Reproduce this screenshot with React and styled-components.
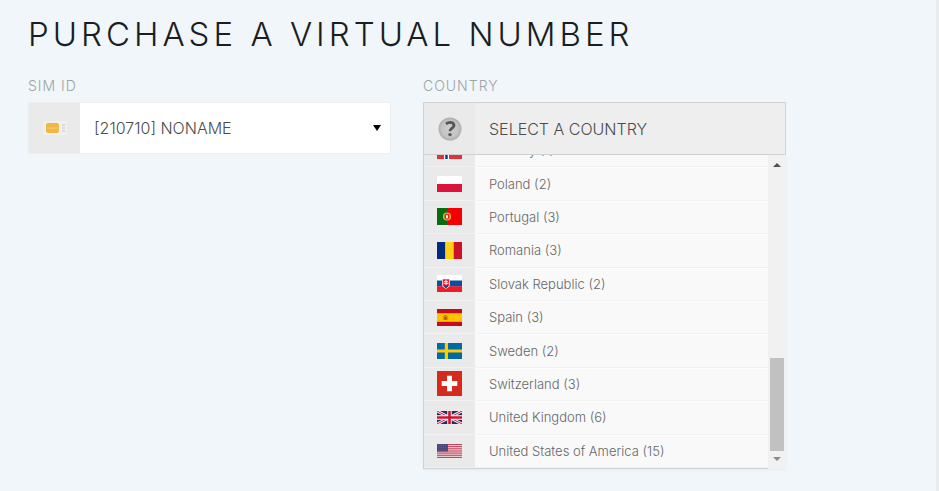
import React, { useState } from 'react'
import styled, { createGlobalStyle } from 'styled-components'

const countries = [
  { code: 'no', name: 'Norway', count: 1 },
  { code: 'pl', name: 'Poland', count: 2 },
  { code: 'pt', name: 'Portugal', count: 3 },
  { code: 'ro', name: 'Romania', count: 3 },
  { code: 'sk', name: 'Slovak Republic', count: 2 },
  { code: 'es', name: 'Spain', count: 3 },
  { code: 'se', name: 'Sweden', count: 2 },
  { code: 'ch', name: 'Switzerland', count: 3 },
  { code: 'gb', name: 'United Kingdom', count: 6 },
  { code: 'us', name: 'United States of America', count: 15 },
]

// every flag is 25 wide, the height follows the country's own ratio
const flags = {
  no: {
    height: 18,
    art: (
      <>
        <path fill='#e03238' d='M0 0h25v18H0z' />
        <path fill='#fff' d='M7 0h5v18H7zM0 6.500h25v5H0z' />
        <path fill='#17306b' d='M8.300 0h2.400v18H8.300zM0 7.800h25v2.400H0z' />
      </>
    ),
  },
  pl: {
    height: 16,
    art: (
      <>
        <path fill='#fff' d='M0 0h25v8H0z' />
        <path fill='#dc143c' d='M0 8h25v8H0z' />
      </>
    ),
  },
  pt: {
    height: 17,
    art: (
      <>
        <path fill='#f50000' d='M0 0h25v17H0z' />
        <path fill='#0a6a10' d='M0 0h10v17H0z' />
        <circle cx='10' cy='8.500' r='3.500' fill='#c8662a' stroke='#d8bf2a' strokeWidth='1.100' />
        <path fill='#e8201c' d='M8 6.200h4v3.300a2 2 0 0 1-4 0z' />
        <path fill='#fff' d='M9 7.200h2v2.300a1 1 0 0 1-2 0z' />
      </>
    ),
  },
  ro: {
    height: 17,
    art: (
      <>
        <path fill='#002b7f' d='M0 0h8.400v17H0z' />
        <path fill='#fcd116' d='M8.400 0h8.300v17H8.400z' />
        <path fill='#ce1126' d='M16.700 0H25v17h-8.300z' />
      </>
    ),
  },
  sk: {
    height: 17,
    art: (
      <>
        <path fill='#fff' d='M0 0h25v6H0z' />
        <path fill='#0b4ea2' d='M0 5.500h25v6H0z' />
        <path fill='#ee1c25' d='M0 11.300h25V17H0z' />
        <path fill='#fff' d='M5 3.500h8v5.500q0 3.200-4 4.700-4-1.500-4-4.700z' />
        <path fill='#ee1c25' d='M5.700 4.200h6.600V9q0 2.700-3.300 4-3.300-1.300-3.300-4z' />
        <path fill='#fff' d='M8.500 4.800h1v1.100h1.400v.9H9.500v1h2v.9h-2v1.500h-1V8.700h-2v-.9h2v-1H7.100v-.9h1.400z' />
        <path fill='#0b4ea2' d='M6.700 11q1-1.400 2.300-.6 1.300-.8 2.300.6-.8 1.300-2.300 2-1.500-.7-2.300-2z' />
      </>
    ),
  },
  es: {
    height: 17,
    art: (
      <>
        <path fill='#c60b1e' d='M0 0h25v17H0z' />
        <path fill='#ffc400' d='M0 4.200h25v8.600H0z' />
        <path fill='#c98a2c' d='M5.800 6.800h1v4.200h-1zM10.200 6.800h1v4.200h-1z' />
        <path fill='#b4502a' d='M7.200 5.900h2.600v.9H7.200zM7.200 7.500h2.600v2.500a1.300 1.300 0 0 1-2.600 0z' />
      </>
    ),
  },
  se: {
    height: 16,
    art: (
      <>
        <path fill='#006aa7' d='M0 0h25v16H0z' />
        <path fill='#fecc00' d='M7.800 0H11v16H7.800zM0 6.400h25v3.200H0z' />
      </>
    ),
  },
  ch: {
    height: 25,
    art: (
      <>
        <path fill='#d52b1e' d='M0 0h25v25H0z' />
        <path fill='#fff' d='M10 4.700h5V10h5.300v5H15v5.300h-5V15H4.700v-5H10z' />
      </>
    ),
  },
  gb: {
    height: 13,
    art: (
      <>
        <path fill='#1c2f70' d='M0 0h25v13H0z' />
        <path stroke='#fff' strokeWidth='2.800' d='M0 0l25 13M25 0L0 13' />
        <path stroke='#cf142b' strokeWidth='1' d='M0 0l25 13M25 0L0 13' />
        <path fill='#fff' d='M10.300 0h4.400v13h-4.400zM0 4.300h25v4.400H0z' />
        <path fill='#cf142b' d='M11.200 0h2.600v13h-2.600zM0 5.200h25v2.600H0z' />
      </>
    ),
  },
  us: {
    height: 14,
    art: (
      <>
        <path fill='#eac8cf' d='M0 0h25v14H0z' />
        <path stroke='#c2455c' d='M0 .5h25M0 2.600h25M0 4.800h25M0 7h25M0 9.100h25M0 11.300h25M0 13.500h25' />
        <path fill='#484678' d='M0 0h11v7.500H0z' />
        <path stroke='#9492b2' strokeWidth='.6' strokeDasharray='.7 1.100' d='M1 1.500h9.500M1 3.700h9.500M1 5.900h9.500' />
      </>
    ),
  },
}

const Flag = ({ code }) => {
  const { height, art } = flags[code]
  return (
    <svg width='25' height={height} viewBox={`0 0 25 ${height}`} aria-hidden='true'>
      {art}
    </svg>
  )
}

const SimIcon = () => (
  <svg width='26' height='16' viewBox='0 0 26 16' aria-hidden='true'>
    <rect x='1' y='1' width='24' height='14' rx='2' fill='#f0f0ef' />
    <rect x='4' y='3' width='13' height='10' rx='2' fill='#efb843' />
    <path stroke='#f7d27d' strokeWidth='.8' d='M5 8h4l1 .7 1-.7h5' fill='none' />
    <path fill='#d5dade' d='M20 4h3v2h-3zM20 7h3v2h-3zM20 10h3v2h-3z' />
  </svg>
)

const QuestionIcon = () => (
  <svg width='24' height='24' viewBox='0 0 24 24' aria-hidden='true'>
    <defs>
      <radialGradient id='disc'>
        <stop offset='0' stopColor='#d2d2d2' />
        <stop offset='.75' stopColor='#c2c2c2' />
        <stop offset='1' stopColor='#adadad' />
      </radialGradient>
    </defs>
    <circle cx='12' cy='12' r='11.500' fill='url(#disc)' />
    <path
      d='M7.900 6.900Q11.800 4.300 14.700 5.900Q17 8 15.200 10.200Q14.200 11.300 13 12Q12 12.800 12 14.300'
      fill='none'
      stroke='#555'
      strokeWidth='2.700'
    />
    <circle cx='12' cy='17.600' r='1.700' fill='#555' />
  </svg>
)

const App = () => {
  const [open, setOpen] = useState(true)
  const [selected, setSelected] = useState(null)

  const handleSelect = (country) => {
    setSelected(country)
    setOpen(false)
  }

  return (
    <>
      <GlobalStyle />
      <Page>
        <Title>PURCHASE A VIRTUAL NUMBER</Title>
        <Fields>
          <Field>
            <Label htmlFor='sim'>SIM ID</Label>
            <SelectBox>
              <IconCell>
                <SimIcon />
              </IconCell>
              <SimSelect id='sim' defaultValue='210710'>
                <option value='210710'>[210710] NONAME</option>
              </SimSelect>
              <Caret width='8' height='6' viewBox='0 0 8 6' aria-hidden='true'>
                <path d='M0 0h8L4 6z' />
              </Caret>
            </SelectBox>
          </Field>
          <Field>
            <Label htmlFor='country'>COUNTRY</Label>
            <CountryButton
              id='country'
              type='button'
              aria-haspopup='listbox'
              aria-expanded={open}
              onClick={() => setOpen(!open)}
            >
              <IconCell>
                {selected ? <Flag code={selected.code} /> : <QuestionIcon />}
              </IconCell>
              <ButtonText>
                {selected ? selected.name : 'SELECT A COUNTRY'}
              </ButtonText>
            </CountryButton>
            {open && (
              <Dropdown>
                <Viewport>
                  <CountryList role='listbox' aria-label='Country'>
                    {countries.map((country) => (
                      <CountryRow
                        key={country.code}
                        role='option'
                        aria-selected={selected?.code === country.code}
                        onClick={() => handleSelect(country)}
                      >
                        <IconCell>
                          <Flag code={country.code} />
                        </IconCell>
                        <CountryName>
                          {country.name} ({country.count})
                        </CountryName>
                      </CountryRow>
                    ))}
                  </CountryList>
                </Viewport>
                <ScrollTrack aria-hidden='true'>
                  <svg width='8' height='4' viewBox='0 0 8 4'>
                    <path fill='#505050' d='M0 4l4-4 4 4z' />
                  </svg>
                  <ScrollThumb />
                  <svg width='8' height='4' viewBox='0 0 8 4'>
                    <path fill='#8b8b8b' d='M0 0l4 4 4-4z' />
                  </svg>
                </ScrollTrack>
              </Dropdown>
            )}
          </Field>
        </Fields>
      </Page>
    </>
  )
}

export default App

const GlobalStyle = createGlobalStyle`
  * {
    box-sizing: border-box;
  }

  body {
    margin: 0;
    background: #e9ebec;
    font-family: Inter, 'Open Sans', sans-serif;
    font-weight: 300;
  }
`

const Page = styled.main`
  min-height: 100vh;
  margin-right: 3px;
  padding: 14px 150px 20px 28px;
  background: #f0f6fa;
`

const Title = styled.h1`
  margin: 0;
  color: #1b1d1f;
  font-size: 33px;
  font-weight: 300;
  line-height: 40px;
  letter-spacing: 4px;
  white-space: nowrap;
`

const Fields = styled.div`
  display: grid;
  grid-template-columns: 1fr 1fr;
  gap: 32px;
  align-items: start;
  margin-top: 22px;
`

const Field = styled.div`
  display: flex;
  flex-direction: column;
  min-width: 0;
`

const Label = styled.label`
  height: 26px;
  color: #9da5a5;
  font-size: 14px;
  line-height: 20px;
  letter-spacing: 1px;
`

const IconCell = styled.span`
  display: flex;
  flex: none;
  align-items: center;
  justify-content: center;
  align-self: stretch;
  width: 51px;
  background: #eaeaea;
`

const SelectBox = styled.div`
  display: flex;
  align-items: center;
  height: 52px;
  padding-right: 9px;
  border: 1px solid #edf0f0;
  background: #fff;
`

const SimSelect = styled.select`
  flex: 1;
  min-width: 0;
  height: 100%;
  padding: 0 14px;
  appearance: none;
  border: none;
  background: transparent;
  color: #4c4c4c;
  font: inherit;
  font-size: 16px;
`

const Caret = styled.svg`
  flex: none;
  pointer-events: none;
`

const CountryButton = styled.button`
  display: flex;
  align-items: center;
  height: 53px;
  padding: 0;
  border: 1px solid #cfd3d3;
  background: #eee;
  color: #4c4c4c;
  font: inherit;
  font-size: 16px;
  text-align: left;
  cursor: pointer;
`

const ButtonText = styled.span`
  padding: 0 14px;
`

const Dropdown = styled.div`
  display: flex;
  height: 314px;
  box-shadow: 0 1px 3px rgba(0, 0, 0, 0.05);
`

/* shows the tail of the list, the rows above it are scrolled away */
const Viewport = styled.div`
  display: flex;
  flex: 1;
  flex-direction: column;
  justify-content: flex-end;
  min-width: 0;
  overflow: hidden;
  border: 1px solid #cfd3d3;
  border-width: 0 0 1px 1px;
`

const CountryList = styled.ul`
  display: grid;
  flex: none;
  grid-auto-rows: 1fr;
  height: 334px;
  margin: 0;
  padding: 0;
  list-style: none;
`

const CountryRow = styled.li`
  display: flex;
  align-items: center;
  border-bottom: 1px solid #f1f1f1;
  background: #f9f9f9;
  box-shadow: inset 0 1px #fdfdfd;
  cursor: pointer;
`

const CountryName = styled.span`
  padding: 0 14px;
  color: #666;
  font-size: 13px;
  white-space: nowrap;
`

const ScrollTrack = styled.div`
  display: flex;
  flex: none;
  flex-direction: column;
  align-items: center;
  justify-content: space-between;
  width: 18px;
  padding: 8px 0;
  background: #f1f1f1;
`

const ScrollThumb = styled.div`
  width: 14px;
  height: 93px;
  margin: auto 0 6px;
  background: #c1c1c1;
`
